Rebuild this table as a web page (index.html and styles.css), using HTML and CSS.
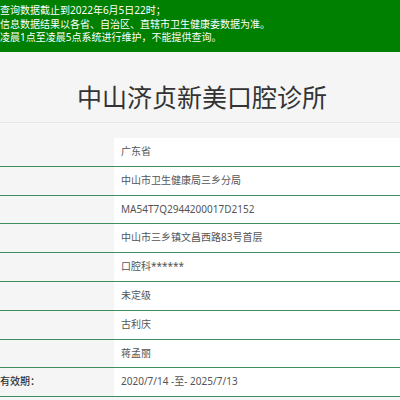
FILE: index.html
```html
<!DOCTYPE html>
<html lang="zh-CN">
<head>
<meta charset="utf-8">
<title>中山济贞新美口腔诊所</title>
<link rel="stylesheet" href="styles.css">
</head>
<body>
<div class="notice">
  <p>查询数据截止到2022年6月5日22时；</p>
  <p>信息数据结果以各省、自治区、直辖市卫生健康委数据为准。</p>
  <p>凌晨1点至凌晨5点系统进行维护，不能提供查询。</p>
</div>
<div class="head">
  <h1 class="title">中山济贞新美口腔诊所</h1>
</div>
<div class="table">
  <div class="row"><div class="label"></div><div class="value">广东省</div></div>
  <div class="row"><div class="label"></div><div class="value">中山市卫生健康局三乡分局</div></div>
  <div class="row"><div class="label"></div><div class="value">MA54T7Q2944200017D2152</div></div>
  <div class="row"><div class="label"></div><div class="value">中山市三乡镇文昌西路83号首层</div></div>
  <div class="row"><div class="label"></div><div class="value">口腔科******</div></div>
  <div class="row"><div class="label"></div><div class="value">未定级</div></div>
  <div class="row"><div class="label"></div><div class="value">古利庆</div></div>
  <div class="row"><div class="label"></div><div class="value">蒋孟丽</div></div>
  <div class="row"><div class="label">有效期：</div><div class="value">2020/7/14 -至- 2025/7/13</div></div>
</div>
</body>
</html>
```
FILE: styles.css
```css
html, body {
  margin: 0;
  padding: 0;
}
body {
  background: #f5f5f5;
  font-family: "Noto Sans", "Noto Sans CJK SC", sans-serif;
  color: #333;
  overflow: hidden;
}
.notice {
  background: #008000;
  color: #fff;
  height: 52px;
  box-sizing: border-box;
  padding-top: 4px;
  font-size: 10px;
  line-height: 13.5px;
}
.notice p {
  margin: 0;
}
.head {
  padding: 30px 0 10px;
  border-bottom: 1px solid #e6e6e6;
}
.title {
  margin: 0;
  text-align: center;
  font-size: 25px;
  font-weight: normal;
  line-height: 30px;
  color: #333;
  padding-left: 4px;
}
.table {
  margin-top: 15px;
}
.row {
  display: flex;
  height: 27.8px;
  border-bottom: 1px solid #3e8e5e;
}
.label {
  width: 114px;
  flex: none;
  font-size: 10px;
  line-height: 27.8px;
  color: #333;
  font-weight: 500;
  overflow: hidden;
  white-space: nowrap;
}
.value {
  flex: 1;
  background: #fff;
  padding-left: 7px;
  font-size: 10px;
  line-height: 27.8px;
  color: #555;
  white-space: nowrap;
}
```
